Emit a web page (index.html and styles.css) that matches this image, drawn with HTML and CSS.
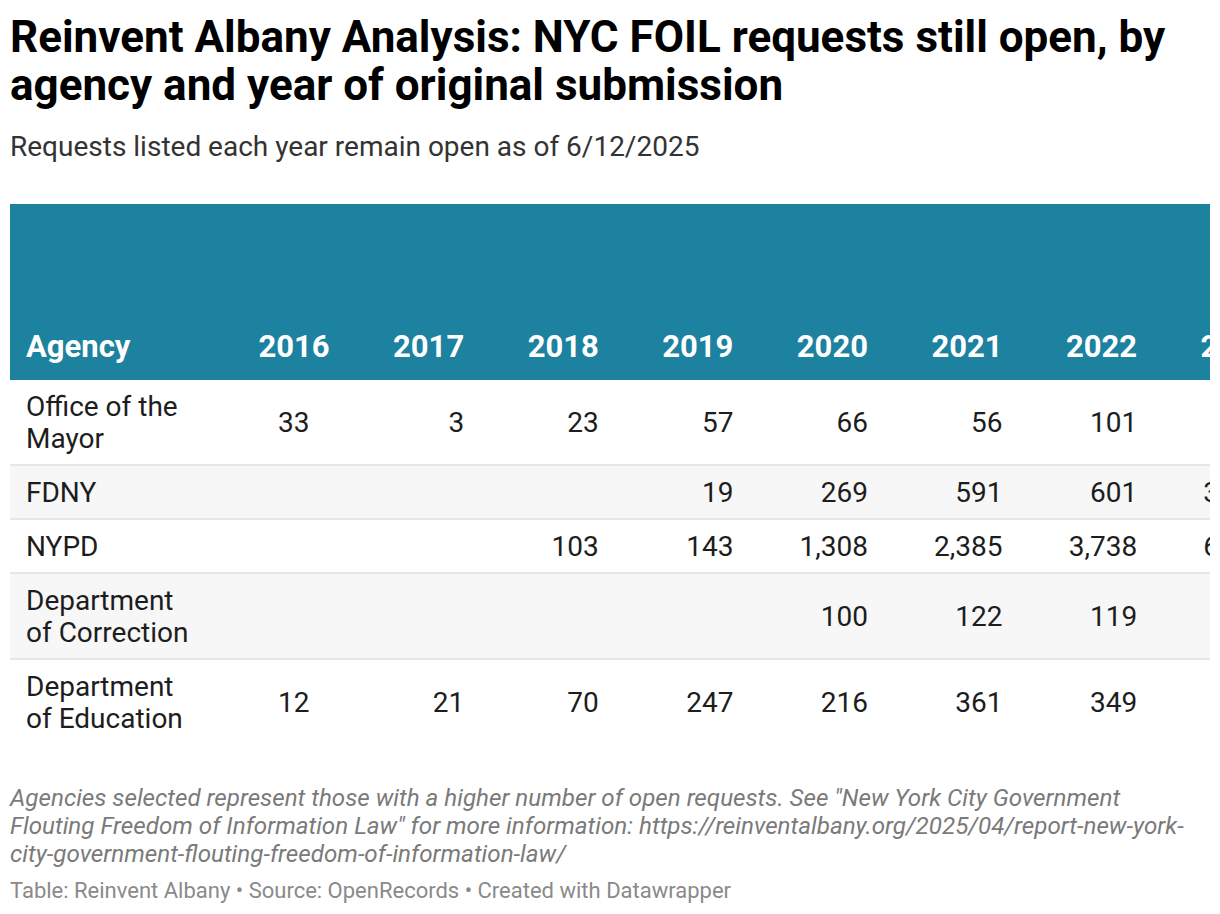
FILE: index.html
```html
<!DOCTYPE html>
<html lang="en">
<head>
<meta charset="utf-8">
<title>Reinvent Albany Analysis: NYC FOIL requests still open</title>
<link rel="stylesheet" href="styles.css">
</head>
<body>
<div class="chart">
  <h1 class="title">Reinvent Albany Analysis: NYC FOIL requests still open, by agency and year of original submission</h1>
  <p class="subtitle">Requests listed each year remain open as of 6/12/2025</p>
  <div class="table-wrap">
    <table class="data">
      <colgroup>
        <col class="c-agency">
        <col class="c-year"><col class="c-year"><col class="c-year"><col class="c-year">
        <col class="c-year"><col class="c-year"><col class="c-year"><col class="c-year">
        <col class="c-year"><col class="c-year">
      </colgroup>
      <thead>
        <tr>
          <th class="agency">Agency</th>
          <th>2016</th><th>2017</th><th>2018</th><th>2019</th><th>2020</th>
          <th>2021</th><th>2022</th><th>2023</th><th>2024</th><th>2025</th>
        </tr>
      </thead>
      <tbody>
        <tr>
          <td class="agency">Office of the Mayor</td>
          <td class="y16">33</td><td>3</td><td>23</td><td>57</td><td>66</td>
          <td>56</td><td>101</td><td>187</td><td>412</td><td>398</td>
        </tr>
        <tr class="alt">
          <td class="agency">FDNY</td>
          <td class="y16"></td><td></td><td></td><td>19</td><td>269</td>
          <td>591</td><td>601</td><td>3,044</td><td>2,816</td><td>1,207</td>
        </tr>
        <tr>
          <td class="agency">NYPD</td>
          <td class="y16"></td><td></td><td>103</td><td>143</td><td>1,308</td>
          <td>2,385</td><td>3,738</td><td>6,215</td><td>8,904</td><td>5,132</td>
        </tr>
        <tr class="alt">
          <td class="agency">Department of Correction</td>
          <td class="y16"></td><td></td><td></td><td></td><td>100</td>
          <td>122</td><td>119</td><td>264</td><td>503</td><td>311</td>
        </tr>
        <tr>
          <td class="agency">Department of Education</td>
          <td class="y16">12</td><td>21</td><td>70</td><td>247</td><td>216</td>
          <td>361</td><td>349</td><td>522</td><td>781</td><td>640</td>
        </tr>
      </tbody>
    </table>
  </div>
  <p class="notes">Agencies selected represent those with a higher number of open requests. See "New York City Government Flouting Freedom of Information Law" for more information: https://reinventalbany.org/2025/04/report-new-york-city-government-flouting-freedom-of-information-law/</p>
  <p class="byline">Table: Reinvent Albany • Source: OpenRecords • Created with Datawrapper</p>
</div>
</body>
</html>
```

FILE: styles.css
```css
html, body {
  margin: 0;
  padding: 0;
  background: #ffffff;
}

body {
  font-family: Roboto, "Liberation Sans", sans-serif;
  color: #1d1d1d;
}

.chart {
  padding: 13px 10px 0 10px;
}

.title {
  margin: 0;
  font-size: 44px;
  line-height: 48px;
  font-weight: 700;
  color: #000000;
}

.subtitle {
  margin: 22px 0 0 0;
  font-size: 28px;
  line-height: 32px;
  font-weight: 400;
  color: #333333;
}

.table-wrap {
  margin-top: 41px;
  width: 1200px;
  overflow: hidden;
}

.data {
  table-layout: fixed;
  border-collapse: collapse;
  border-spacing: 0;
  width: 1541px;
}

.c-agency { width: 195px; }
.c-year { width: 134.6px; }

.data th {
  background: #1d81a0;
  color: #ffffff;
  font-size: 31px;
  line-height: 38px;
  font-weight: 700;
  text-align: right;
  vertical-align: bottom;
  height: 162px;
  padding: 0 10px 14px 0;
  white-space: nowrap;
}

.data th.agency {
  text-align: left;
  padding-left: 16px;
}

.data td {
  font-size: 28px;
  line-height: 32px;
  text-align: right;
  vertical-align: middle;
  padding: 11px 10px 9px 0;
  border-bottom: 2px solid #e6e6e6;
  color: #1d1d1d;
  white-space: nowrap;
}

.data td.agency {
  text-align: left;
  padding-left: 16px;
  white-space: normal;
}

.data td.y16 {
  padding-right: 30px;
}

.data tr.alt td {
  background: #f7f7f7;
}

.data tbody tr:last-child td {
  border-bottom: 0;
}

.notes {
  margin: 40px 0 0 0;
  font-size: 24.2px;
  line-height: 28px;
  font-style: italic;
  color: #7a7a7a;
  max-width: 1192px;
}

.byline {
  margin: 11px 0 0 0;
  font-size: 22px;
  line-height: 24px;
  color: #8a8a8a;
}
```
